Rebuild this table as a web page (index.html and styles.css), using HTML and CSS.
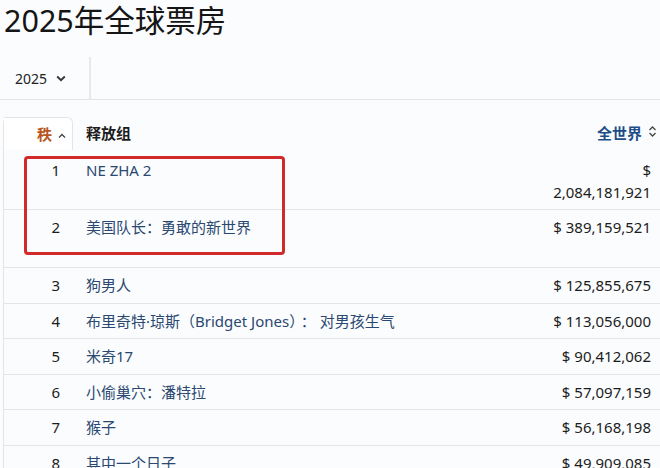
FILE: index.html
```html
<!DOCTYPE html>
<html lang="zh-CN">
<head>
    <meta charset="UTF-8">
    <meta name="viewport" content="width=device-width, initial-scale=1.0">
    <title>2025年全球票房</title>
    <link rel="stylesheet" href="styles.css">
</head>
<body>
    <h1 class="title">2025年全球票房</h1>

    <div class="filter-bar">
        <div class="year-select">
            <span>2025</span>
            <svg class="chev" width="10" height="7" viewBox="0 0 10 7"><path d="M1.2 1.5L5 5.2l3.8-3.7" fill="none" stroke="#333" stroke-width="1.8"/></svg>
        </div>
    </div>

    <div class="table">
        <div class="row head">
            <div class="cell rank sorted">秩
                <svg width="8" height="6" viewBox="0 0 8 6"><path d="M1 4.5L4 1.5l3 3" fill="none" stroke="#444" stroke-width="1.3"/></svg>
            </div>
            <div class="cell name">释放组</div>
            <div class="cell gross">全世界
                <svg width="9" height="13" viewBox="0 0 9 13"><path d="M1.5 5L4.5 2l3 3M1.5 8l3 3 3-3" fill="none" stroke="#444" stroke-width="1.3"/></svg>
            </div>
        </div>

        <div class="row first">
            <div class="cell rank">1</div>
            <div class="cell name"><a href="#">NE ZHA 2</a></div>
            <div class="cell gross">$ 2,084,181,921</div>
        </div>
        <div class="row tall">
            <div class="cell rank">2</div>
            <div class="cell name"><a href="#">美国队长：勇敢的新世界</a></div>
            <div class="cell gross">$ 389,159,521</div>
        </div>
        <div class="row">
            <div class="cell rank">3</div>
            <div class="cell name"><a href="#">狗男人</a></div>
            <div class="cell gross">$ 125,855,675</div>
        </div>
        <div class="row">
            <div class="cell rank">4</div>
            <div class="cell name"><a href="#">布里奇特·琼斯（Bridget Jones）<span class="colon">：</span>对男孩生气</a></div>
            <div class="cell gross">$ 113,056,000</div>
        </div>
        <div class="row">
            <div class="cell rank">5</div>
            <div class="cell name"><a href="#">米奇17</a></div>
            <div class="cell gross">$ 90,412,062</div>
        </div>
        <div class="row">
            <div class="cell rank">6</div>
            <div class="cell name"><a href="#">小偷巢穴：潘特拉</a></div>
            <div class="cell gross">$ 57,097,159</div>
        </div>
        <div class="row">
            <div class="cell rank">7</div>
            <div class="cell name"><a href="#">猴子</a></div>
            <div class="cell gross">$ 56,168,198</div>
        </div>
        <div class="row">
            <div class="cell rank">8</div>
            <div class="cell name"><a href="#">其中一个日子</a></div>
            <div class="cell gross">$ 49,909,085</div>
        </div>
    </div>

    <div class="highlight"></div>
</body>
</html>
```

FILE: styles.css
```css
body {
    margin: 0;
    background-color: #fbfcfe;
    font-family: "Noto Sans", "Noto Sans CJK SC", sans-serif;
    color: #1c1c1c;
    overflow: hidden;
}
.title {
    margin: 0;
    padding-left: 4px;
    height: 40px;
    font-size: 30.5px;
    line-height: 40px;
    font-weight: normal;
    color: #151515;
}
.filter-bar {
    margin-top: 17px;
    height: 42px;
    border-bottom: 1px solid #e3e4e6;
    display: flex;
}
.year-select {
    width: 91px;
    border-right: 2px solid #e8e9eb;
    display: flex;
    align-items: center;
    padding-left: 15px;
    box-sizing: border-box;
    font-size: 14px;
    color: #222;
}
.year-select .chev {
    margin-left: 9px;
}
.table {
    margin: 17px 0 0 3px;
    border-left: 1px solid #e4e5e7;
    border-top-left-radius: 6px;
}
.row {
    display: grid;
    grid-template-columns: 69px 1fr 110px;
    height: 35.5px;
    box-sizing: border-box;
    border-top: 1px solid #e4e5e7;
    padding-right: 9px;
    font-size: 15px;
    line-height: 22px;
}
.cell {
    padding-top: 6px;
}
.rank {
    text-align: right;
    padding-right: 13px;
}
.name {
    padding-left: 13px;
    white-space: nowrap;
}
.name a {
    color: #2a4870;
    text-decoration: none;
}
.name .colon {
    margin: 0 4px;
}
.gross {
    text-align: right;
}
.row.head {
    height: 33px;
    border-top: none;
    padding-right: 3px;
    font-weight: bold;
}
.head .cell {
    padding-top: 5px;
}
.head .rank {
    padding-right: 6px;
    color: #b8561d;
}
.head .sorted {
    border-top: 1px solid #e4e5e7;
    border-right: 1px solid #e4e5e7;
    border-top-right-radius: 6px;
    background: #fff;
}
.head svg {
    margin-left: 2px;
    vertical-align: 1px;
}
.head .gross {
    color: #1d4d86;
}
.row.first {
    height: 59px;
    border-top: none;
}
.row.first .cell {
    padding-top: 9px;
}
.row.tall {
    height: 58px;
}
.highlight {
    position: absolute;
    left: 24px;
    top: 156px;
    width: 261px;
    height: 99px;
    box-sizing: border-box;
    border: 3px solid #d02a2a;
    border-radius: 4px;
}
```
